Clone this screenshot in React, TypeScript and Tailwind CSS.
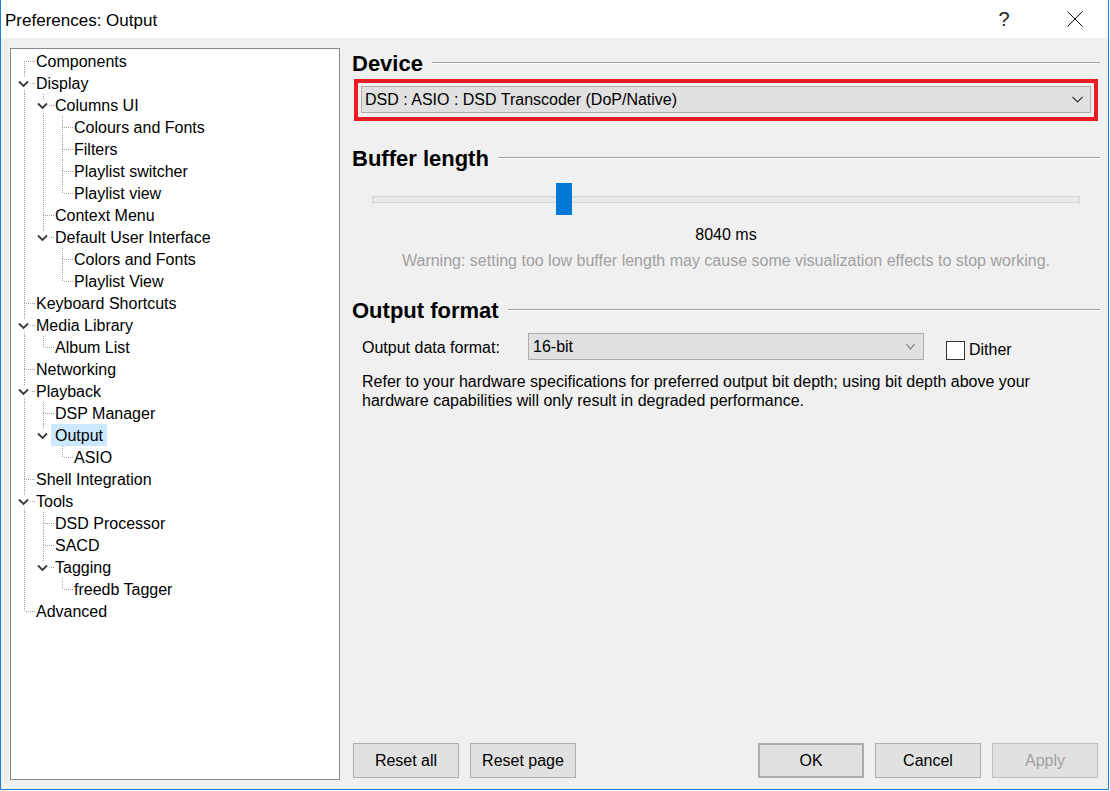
import React from 'react';

interface TreeItem {
  label: string;
  level: number;
  open?: boolean;
  selected?: boolean;
}

// preferences tree, in display order
const tree: TreeItem[] = [
  { label: 'Components', level: 0 },
  { label: 'Display', level: 0, open: true },
  { label: 'Columns UI', level: 1, open: true },
  { label: 'Colours and Fonts', level: 2 },
  { label: 'Filters', level: 2 },
  { label: 'Playlist switcher', level: 2 },
  { label: 'Playlist view', level: 2 },
  { label: 'Context Menu', level: 1 },
  { label: 'Default User Interface', level: 1, open: true },
  { label: 'Colors and Fonts', level: 2 },
  { label: 'Playlist View', level: 2 },
  { label: 'Keyboard Shortcuts', level: 0 },
  { label: 'Media Library', level: 0, open: true },
  { label: 'Album List', level: 1 },
  { label: 'Networking', level: 0 },
  { label: 'Playback', level: 0, open: true },
  { label: 'DSP Manager', level: 1 },
  { label: 'Output', level: 1, open: true, selected: true },
  { label: 'ASIO', level: 2 },
  { label: 'Shell Integration', level: 0 },
  { label: 'Tools', level: 0, open: true },
  { label: 'DSD Processor', level: 1 },
  { label: 'SACD', level: 1 },
  { label: 'Tagging', level: 1, open: true },
  { label: 'freedb Tagger', level: 2 },
  { label: 'Advanced', level: 0 },
];

// is there another item at this level further down before the branch closes
const nextAt = (i: number, level: number) => {
  for (let k = i + 1; k < tree.length; k++) {
    if (tree[k].level < level) return false;
    if (tree[k].level === level) return true;
  }
  return false;
};

const COL = 19;

function TreeRow({ item, i }: { item: TreeItem; i: number }) {
  const L = item.level;
  const cx = L * COL + 11.5;
  const w = (L + 1) * COL + 3;
  const dot = { stroke: '#a0a0a0', strokeDasharray: '1 1', shapeRendering: 'crispEdges' as const };

  return (
    <div className="flex h-[22px] items-center">
      <svg width={w} height={22} className="shrink-0">
        {Array.from({ length: L }, (_, j) =>
          nextAt(i, j) ? <line key={j} x1={j * COL + 11.5} y1={0} x2={j * COL + 11.5} y2={22} {...dot} /> : null
        )}
        {i > 0 && <line x1={cx} y1={0} x2={cx} y2={11} {...dot} />}
        {nextAt(i, L) && <line x1={cx} y1={11} x2={cx} y2={22} {...dot} />}
        <line x1={cx + 1.5} y1={11.5} x2={w} y2={11.5} {...dot} />
        {item.open && (
          <>
            <rect x={cx - 6.5} y={6} width={12.5} height={11.5} fill="#fff" />
            <path
              d={`M${cx - 5.5} 9.5 L${cx - 1} 14 L${cx + 3.5} 9.5`}
              fill="none"
              stroke="#3a3a3a"
              strokeWidth={1.9}
            />
          </>
        )}
      </svg>
      <span
        className={`-ml-[3px] h-[22px] pl-[4px] pr-[4px] pt-[1px] text-[16px] leading-[21px] whitespace-nowrap ${
          item.selected ? 'bg-[#cce8ff]' : ''
        }`}
      >
        {item.label}
      </span>
    </div>
  );
}

function Heading({ children }: { children: React.ReactNode }) {
  return (
    <div className="flex h-[30px] items-center">
      <span className="text-[22px] font-bold leading-[31px]">{children}</span>
      <div className="ml-[9px] flex-1 border-t border-b border-t-[#a0a0a0] border-b-white" />
    </div>
  );
}

function Chevron({ color = '#333', size = 11 }: { color?: string; size?: number }) {
  return (
    <svg width={size} height={7} viewBox={`0 0 ${size} 7`}>
      <path d={`M0.5 1 L${size / 2} 6 L${size - 0.5} 1`} fill="none" stroke={color} strokeWidth={1.1} />
    </svg>
  );
}

function Button({ children, className = '' }: { children: React.ReactNode; className?: string }) {
  return (
    <div
      className={`flex h-[35px] w-[106px] items-center justify-center border border-[#adadad] bg-[#e1e1e1] text-[16px] ${className}`}
    >
      {children}
    </div>
  );
}

export default function App() {
  return (
    <div className="h-[791px] w-[1110px] bg-white font-['Liberation_Sans',Arial,sans-serif] text-black">
      <div className="flex h-[790px] w-[1109px] flex-col border-x border-b border-[#1c7fd6]">
        {/* title bar */}
        <div className="flex h-[38px] shrink-0 items-start bg-white">
          <span className="pl-[4px] pt-[11px] text-[17px] leading-[20px]">Preferences: Output</span>
          <div className="ml-auto flex h-[38px] w-[46px] items-center justify-center text-[20px] leading-[20px] text-[#222]">
            ?
          </div>
          <div className="ml-[25px] mr-[10px] flex h-[38px] w-[46px] items-center justify-center">
            <svg width="16" height="16" viewBox="0 0 16 16">
              <path d="M0.5 0.5 L15.5 15.5 M15.5 0.5 L0.5 15.5" stroke="#111" strokeWidth={1} />
            </svg>
          </div>
        </div>

        {/* body */}
        <div className="flex flex-1 bg-[#f0f0f0] pl-[9px] pr-[8px] pt-[10px]">
          <div className="h-[732px] w-[330px] shrink-0 border border-[#828790] bg-white pl-[2px] pt-[1px]">
            {tree.map((item, i) => (
              <TreeRow key={i} item={item} i={i} />
            ))}
          </div>

          <div className="ml-[12px] flex h-[732px] w-[748px] flex-col">
            <Heading>Device</Heading>
            <div className="ml-[2px] mt-[1px] h-[42px] w-[744px] border-4 border-[#ed1c24] px-[3px] pb-[4px] pt-[3px]">
              <div className="flex h-full items-center border border-[#adadad] bg-[#e1e1e1] pl-[3px] pr-[7px] text-[16px]">
                <span className="pt-[1px]">DSD : ASIO : DSD Transcoder (DoP/Native)</span>
                <span className="ml-auto flex">
                  <Chevron />
                </span>
              </div>
            </div>

            <div className="mt-[22px]">
              <Heading>Buffer length</Heading>
            </div>
            <div className="relative mt-[10px] flex h-[32px] items-center">
              <div className="ml-[20px] h-[7px] w-[708px] border border-[#d6d6d6] bg-[#e7eaea]" />
              <div className="absolute left-[204px] top-0 h-[32px] w-[16px] bg-[#0078d7]" />
            </div>
            <div className="mt-[10px] text-center text-[16px] leading-[20px]">8040 ms</div>
            <div className="mt-[6px] text-center text-[16px] leading-[20px] text-[#a0a0a0]">
              Warning: setting too low buffer length may cause some visualization effects to stop working.
            </div>

            <div className="mt-[24px]">
              <Heading>Output format</Heading>
            </div>
            <div className="mt-[8px] flex h-[27px] items-start text-[16px]">
              <span className="mt-[5px] w-[176px] pl-[10px] leading-[20px]">Output data format:</span>
              <div className="flex h-[27px] w-[396px] items-center border border-[#adadad] bg-[#e1e1e1] pl-[4px] pr-[8px]">
                <span className="pt-[1px]">16-bit</span>
                <span className="ml-auto flex">
                  <Chevron color="#777" size={9} />
                </span>
              </div>
              <div className="ml-[22px] mt-[8px] h-[19px] w-[19px] border border-[#333] bg-white" />
              <span className="ml-[4px] mt-[7px] leading-[20px]">Dither</span>
            </div>
            <p className="mt-[12px] pl-[10px] text-[16px] leading-[19px]">
              Refer to your hardware specifications for preferred output bit depth; using bit depth above your
              <br />
              hardware capabilities will only result in degraded performance.
            </p>

            <div className="mb-[2px] mt-auto flex">
              <Button className="ml-[1px]">Reset all</Button>
              <Button className="ml-[11px]">Reset page</Button>
              <Button className="ml-auto border-2 border-[#0078d7]">OK</Button>
              <Button className="ml-[11px]">Cancel</Button>
              <Button className="ml-[11px] mr-[2px] border-[#bfbfbf] bg-[#cccccc] text-[#a0a0a0]">Apply</Button>
            </div>
          </div>
        </div>
      </div>
    </div>
  );
}
